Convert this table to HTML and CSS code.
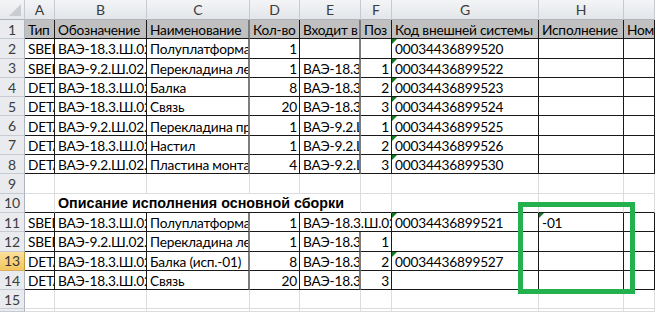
FILE: index.html
```html
<!DOCTYPE html>
<html lang="ru">
<head>
<meta charset="utf-8">
<title>Лист</title>
<link rel="stylesheet" href="styles.css">
</head>
<body>
<div class="sheet">
  <div class="corner"><span class="corner-tri"></span></div>
  <div class="ch">A</div><div class="ch">B</div><div class="ch">C</div><div class="ch">D</div><div class="ch">E</div><div class="ch">F</div><div class="ch">G</div><div class="ch">H</div><div class="ch"></div>

  <div class="rh">1</div>
  <div class="c k hd">Тип</div><div class="c k hd">Обозначение</div><div class="c k g2 hd">Наименование</div><div class="c k hd">Кол-во</div><div class="c k g2 hd">Входит в</div><div class="c k hd">Поз</div><div class="c k hd">Код внешней системы</div><div class="c k hd">Исполнение</div><div class="c k hd">Номер</div>

  <div class="rh">2</div>
  <div class="c k">SBED</div><div class="c k">ВАЭ-18.3.Ш.02</div><div class="c k g2">Полуплатформа</div><div class="c k n">1</div><div class="c k g2"></div><div class="c k n"></div><div class="c k tri">00034436899520</div><div class="c k"></div><div class="c k"></div>

  <div class="rh">3</div>
  <div class="c k">SBED</div><div class="c k">ВАЭ-9.2.Ш.02.1</div><div class="c k g2">Перекладина левая</div><div class="c k n">1</div><div class="c k g2">ВАЭ-18.3.Ш.02</div><div class="c k n">1</div><div class="c k tri">00034436899522</div><div class="c k"></div><div class="c k"></div>

  <div class="rh">4</div>
  <div class="c k">DETAIL</div><div class="c k">ВАЭ-18.3.Ш.02</div><div class="c k g2">Балка</div><div class="c k n">8</div><div class="c k g2">ВАЭ-18.3.Ш.02</div><div class="c k n">2</div><div class="c k tri">00034436899523</div><div class="c k"></div><div class="c k"></div>

  <div class="rh">5</div>
  <div class="c k">DETAIL</div><div class="c k">ВАЭ-18.3.Ш.02</div><div class="c k g2">Связь</div><div class="c k n">20</div><div class="c k g2">ВАЭ-18.3.Ш.02</div><div class="c k n">3</div><div class="c k tri">00034436899524</div><div class="c k"></div><div class="c k"></div>

  <div class="rh">6</div>
  <div class="c k">DETAIL</div><div class="c k">ВАЭ-9.2.Ш.02.1</div><div class="c k g2">Перекладина правая</div><div class="c k n">1</div><div class="c k g2">ВАЭ-9.2.Ш.02.1</div><div class="c k n">1</div><div class="c k tri">00034436899525</div><div class="c k"></div><div class="c k"></div>

  <div class="rh">7</div>
  <div class="c k">DETAIL</div><div class="c k">ВАЭ-18.3.Ш.02</div><div class="c k g2">Настил</div><div class="c k n">1</div><div class="c k g2">ВАЭ-9.2.Ш.02.1</div><div class="c k n">2</div><div class="c k tri">00034436899526</div><div class="c k"></div><div class="c k"></div>

  <div class="rh">8</div>
  <div class="c k">DETAIL</div><div class="c k">ВАЭ-9.2.Ш.02.1</div><div class="c k g2">Пластина монтажная</div><div class="c k n">4</div><div class="c k g2">ВАЭ-9.2.Ш.02.1</div><div class="c k n">3</div><div class="c k tri">00034436899530</div><div class="c k"></div><div class="c k"></div>

  <div class="rh">9</div>
  <div class="c"></div><div class="c"></div><div class="c"></div><div class="c"></div><div class="c"></div><div class="c"></div><div class="c"></div><div class="c"></div><div class="c"></div>

  <div class="rh">10</div>
  <div class="c kb"></div><div class="c kb span4 bold">Описание исполнения основной сборки</div><div class="c kb"></div><div class="c kb"></div><div class="c kb"></div><div class="c kb"></div>

  <div class="rh">11</div>
  <div class="c k">SBED</div><div class="c k">ВАЭ-18.3.Ш.02</div><div class="c k g2">Полуплатформа</div><div class="c k n">1</div><div class="c k span2">ВАЭ-18.3.Ш.02</div><div class="c k tri">00034436899521</div><div class="c k tri">-01</div><div class="c k"></div>

  <div class="rh">12</div>
  <div class="c k">SBED</div><div class="c k">ВАЭ-9.2.Ш.02.1</div><div class="c k g2">Перекладина левая</div><div class="c k n">1</div><div class="c k g2">ВАЭ-18.3.Ш.02</div><div class="c k n">1</div><div class="c k"></div><div class="c k"></div><div class="c k"></div>

  <div class="rh sel">13</div>
  <div class="c k">DETAIL</div><div class="c k">ВАЭ-18.3.Ш.02</div><div class="c k g2">Балка (исп.-01)</div><div class="c k n">8</div><div class="c k g2">ВАЭ-18.3.Ш.02</div><div class="c k n">2</div><div class="c k tri">00034436899527</div><div class="c k"></div><div class="c k"></div>

  <div class="rh">14</div>
  <div class="c k">DETAIL</div><div class="c k">ВАЭ-18.3.Ш.02</div><div class="c k g2">Связь</div><div class="c k n">20</div><div class="c k g2">ВАЭ-18.3.Ш.02</div><div class="c k n">3</div><div class="c k"></div><div class="c k"></div><div class="c k"></div>

  <div class="rh">15</div>
  <div class="c"></div><div class="c"></div><div class="c"></div><div class="c"></div><div class="c"></div><div class="c"></div><div class="c"></div><div class="c"></div><div class="c"></div>

  <div class="rh"></div>
  <div class="c"></div><div class="c"></div><div class="c"></div><div class="c"></div><div class="c"></div><div class="c"></div><div class="c"></div><div class="c"></div><div class="c"></div>

  <div class="mark"></div>
</div>
</body>
</html>
```

FILE: styles.css
```css
html, body {
  margin: 0;
  padding: 0;
  width: 655px;
  height: 312px;
  overflow: hidden;
  background: #ffffff;
}

.sheet {
  position: relative;
  display: grid;
  grid-template-columns: 25px 30px 92px 103px 50px 61px 31px 147px 85px 1fr;
  grid-template-rows: 20px repeat(15, 19.3px) 2.5px;
  width: 655px;
  height: 312px;
  overflow: hidden;
  font-family: "Lato", "Liberation Sans", sans-serif;
  font-size: 13.7px;
  letter-spacing: -0.2px;
  color: #000000;
}

.corner {
  position: relative;
  background: linear-gradient(#f3f4f6, #e6e8eb);
  border-right: 1px solid #c7cbd1;
  border-bottom: 1px solid #aeb4bd;
  box-sizing: border-box;
}

.corner-tri {
  position: absolute;
  right: 3px;
  bottom: 3px;
  width: 0;
  height: 0;
  border-left: 12px solid transparent;
  border-bottom: 12px solid #c9cdd2;
}

.ch {
  display: flex;
  align-items: center;
  justify-content: center;
  background: linear-gradient(#f3f4f6, #e3e6ea);
  border-right: 1px solid #c7cbd1;
  border-bottom: 1px solid #aeb4bd;
  box-sizing: border-box;
  color: #3c3c3c;
  font-size: 14px;
  letter-spacing: 0;
}

.rh {
  display: flex;
  align-items: center;
  justify-content: center;
  background: #e9ebee;
  border-right: 1px solid #aeb4bd;
  border-bottom: 1px solid #c7cbd1;
  box-sizing: border-box;
  color: #3c3c3c;
  font-size: 14px;
  letter-spacing: 0;
  overflow: hidden;
}

.rh.sel {
  background: linear-gradient(#fbe09a, #f3c65f);
  border-right-color: #c29a3f;
  border-bottom-color: #d8b062;
  color: #333333;
}

.c {
  position: relative;
  display: flex;
  align-items: center;
  box-sizing: border-box;
  padding: 1px 2px 0 3px;
  border-right: 1px solid #dadcdd;
  border-bottom: 1px solid #dadcdd;
  white-space: nowrap;
  overflow: hidden;
  min-width: 0;
}

.k {
  border-right-color: #1a1a1a;
  border-bottom-color: #1a1a1a;
}

.kb {
  border-bottom-color: #1a1a1a;
}

.g2 {
  border-right: 2px solid #7d7d7d;
}

.hd {
  background: #c0c0c0;
}

.n {
  justify-content: flex-end;
}

.bold {
  font-family: "Liberation Sans", sans-serif;
  font-weight: bold;
  font-size: 14.3px;
  letter-spacing: 0;
}

.span4 {
  grid-column: span 4;
}

.span2 {
  grid-column: span 2;
}

.tri::before {
  content: "";
  position: absolute;
  left: 0;
  top: 0;
  width: 0;
  height: 0;
  border-top: 5px solid #0d7a1d;
  border-right: 5px solid transparent;
}

.mark {
  position: absolute;
  left: 518px;
  top: 202px;
  width: 117px;
  height: 92px;
  box-sizing: border-box;
  border: 5px solid #22b14c;
}
```
